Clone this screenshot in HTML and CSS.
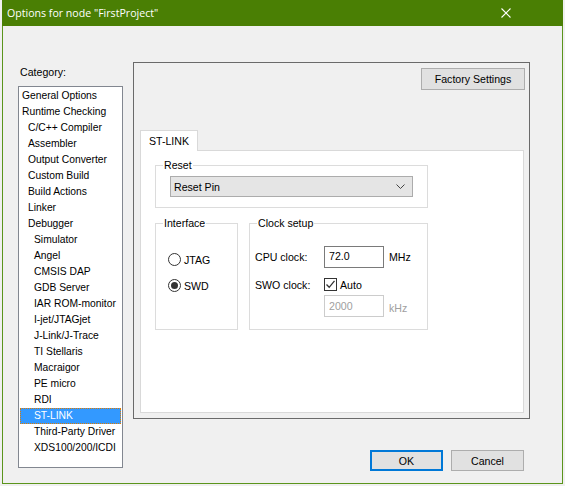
FILE: index.html
```html
<!DOCTYPE html>
<html lang="en">
<head>
  <meta charset="UTF-8" />
  <title>Options for node "FirstProject"</title>
  <link rel="stylesheet" href="styles.css">
</head>
<body>

  <div class="window">
    <div class="titlebar">
      <span class="title">Options for node "FirstProject"</span>
      <svg class="close" width="10" height="10" viewBox="0 0 10 10">
        <path d="M0.5 0.5 L9.5 9.5 M9.5 0.5 L0.5 9.5" stroke="#fff" stroke-width="1.1" fill="none" />
      </svg>
    </div>

    <div class="client">
      <div class="category">
        <div class="cat-label">Category:</div>
        <ul class="listbox">
          <li>General Options</li>
          <li>Runtime Checking</li>
          <li class="l1">C/C++ Compiler</li>
          <li class="l1">Assembler</li>
          <li class="l1">Output Converter</li>
          <li class="l1">Custom Build</li>
          <li class="l1">Build Actions</li>
          <li class="l1">Linker</li>
          <li class="l1">Debugger</li>
          <li class="l2">Simulator</li>
          <li class="l2">Angel</li>
          <li class="l2">CMSIS DAP</li>
          <li class="l2">GDB Server</li>
          <li class="l2">IAR ROM-monitor</li>
          <li class="l2">I-jet/JTAGjet</li>
          <li class="l2">J-Link/J-Trace</li>
          <li class="l2">TI Stellaris</li>
          <li class="l2">Macraigor</li>
          <li class="l2">PE micro</li>
          <li class="l2">RDI</li>
          <li class="l2 selected"><span>ST-LINK</span></li>
          <li class="l2">Third-Party Driver</li>
          <li class="l2">XDS100/200/ICDI</li>
        </ul>
      </div>

      <div class="right">
        <div class="options">
          <div class="options-top">
            <button class="btn factory">Factory Settings</button>
          </div>
          <div class="tabs">
            <div class="tab active">ST-LINK</div>
          </div>
          <div class="tab-page">
            <div class="group reset-group">
              <span class="legend">Reset</span>
              <div class="combo">
                <span>Reset Pin</span>
                <svg width="9" height="5" viewBox="0 0 9 5">
                  <path d="M0.5 0.5 L4.5 4.5 L8.5 0.5" stroke="#444" stroke-width="1" fill="none" />
                </svg>
              </div>
            </div>

            <div class="group-row">
              <div class="group iface-group">
                <span class="legend">Interface</span>
                <div class="radio-row"><span class="radio"></span>JTAG</div>
                <div class="radio-row"><span class="radio checked"></span>SWD</div>
              </div>

              <div class="group clock-group">
                <span class="legend">Clock setup</span>
                <div class="clock-row cpu-row">
                  <span class="clock-label">CPU clock:</span>
                  <span class="field">72.0</span>
                  <span class="unit">MHz</span>
                </div>
                <div class="clock-row swo-row">
                  <span class="clock-label">SWO clock:</span>
                  <span class="checkbox">
                    <svg width="11" height="11" viewBox="0 0 11 11">
                      <path d="M1.5 5.5 L4.2 8.3 L9.5 1.8" stroke="#333" stroke-width="1.3" fill="none" />
                    </svg>
                  </span>
                  <span>Auto</span>
                </div>
                <div class="clock-row khz-row">
                  <span class="clock-label"></span>
                  <span class="field disabled">2000</span>
                  <span class="unit disabled-text">kHz</span>
                </div>
              </div>
            </div>
          </div>
        </div>

        <div class="footer">
          <button class="btn ok">OK</button>
          <button class="btn">Cancel</button>
        </div>
      </div>
    </div>
  </div>

</body>
</html>
```

FILE: styles.css
```css
* { box-sizing: border-box; }
body { margin: 0; background: #f0f0f0; font-family: "Liberation Sans", Arial, sans-serif; font-size: 10.6px; color: #000; }

.window { margin-left: 2px; width: 561px; height: 484px; background: #f0f0f0; border: 1px solid #5b951c; border-top: none; }
.titlebar { height: 26px; margin: 0 -1px; background: #4a7f04; display: flex; align-items: center; justify-content: space-between; padding: 0 52px 1px 5px; }
.title { font-family: "Open Sans", "Noto Sans", sans-serif; font-size: 10.6px; color: #fff; }
.close { display: block; }

.client { display: flex; padding-left: 15px; }

.category { width: 105px; padding-top: 40px; }
.cat-label { height: 20px; padding-left: 2px; line-height: 12px; }
.listbox { list-style: none; margin: 0; padding: 1px; height: 382px; background: #fff; border: 1px solid #828790; font-size: 10.3px; }
.listbox li { height: 16px; line-height: 16px; padding-left: 2px; white-space: nowrap; overflow: hidden; }
.listbox li.l1 { padding-left: 8px; }
.listbox li.l2 { padding-left: 14px; }
.listbox li.selected { background: #3399ff; color: #fff; outline: 1px dotted #e07b00; outline-offset: -1px; }

.right { margin-left: 10px; padding-top: 36px; }
.options { width: 397px; height: 357px; border: 1px solid #6a6a6a; padding: 0 5px 5px 6px; display: flex; flex-direction: column; }
.options-top { height: 67px; display: flex; justify-content: flex-end; align-items: flex-start; padding-top: 5px; }

.btn { font-family: "Liberation Sans", Arial, sans-serif; font-size: 10.6px; color: #000; background: #e1e1e1; border: 1px solid #adadad; height: 22px; padding: 0; }
.factory { width: 104px; margin-right: -1px; }

.tabs { display: flex; height: 20px; }
.tab { position: relative; z-index: 1; height: 21px; width: 58px; padding-left: 8px; line-height: 20px; background: #fff; border: 1px solid #d9d9d9; border-bottom: none; }
.tab-page { flex: 1; background: #fff; border: 1px solid #d9d9d9; padding: 14px 0 0 14px; }

.group { position: relative; border: 1px solid #dcdcdc; }
.legend { position: absolute; top: -7px; left: 7px; padding: 0 1px; background: #fff; line-height: 12px; }

.reset-group { width: 273px; height: 43px; padding: 10px 0 0 14px; }
.combo { width: 243px; height: 21px; background: #e5e5e5; border: 1px solid #acacac; display: flex; align-items: center; justify-content: space-between; padding: 0 7px 0 3px; }

.group-row { display: flex; gap: 11px; margin-top: 15px; }
.iface-group { width: 83px; height: 107px; padding: 29px 0 0 12px; }
.radio-row { display: flex; align-items: center; height: 13px; margin-bottom: 13px; }
.radio { width: 13px; height: 13px; border: 1px solid #333; border-radius: 50%; margin-right: 3px; display: flex; align-items: center; justify-content: center; background: #fff; }
.radio.checked::after { content: ""; width: 7px; height: 7px; border-radius: 50%; background: #333; }

.clock-group { width: 179px; height: 107px; padding: 22px 0 0 5px; }
.clock-row { display: flex; align-items: center; }
.clock-label { width: 69px; }
.field { width: 60px; height: 22px; border: 1px solid #7a7a7a; padding: 3px 0 0 4px; line-height: 13px; margin-right: 5px; }
.field.disabled { border-color: #cccccc; color: #a0a0a0; padding-top: 4px; }
.disabled-text { color: #a0a0a0; padding-top: 3px; }
.swo-row { margin-top: 10px; height: 13px; }
.checkbox { width: 13px; height: 13px; border: 1px solid #333; margin-right: 3px; display: flex; align-items: center; justify-content: center; }
.checkbox svg { display: block; }
.khz-row { margin-top: 4px; }

.footer { display: flex; justify-content: flex-end; gap: 8px; margin-top: 31px; padding-right: 6px; }
.footer .btn { width: 73px; height: 21px; }
.btn.ok { border: 2px solid #0078d7; }
```
